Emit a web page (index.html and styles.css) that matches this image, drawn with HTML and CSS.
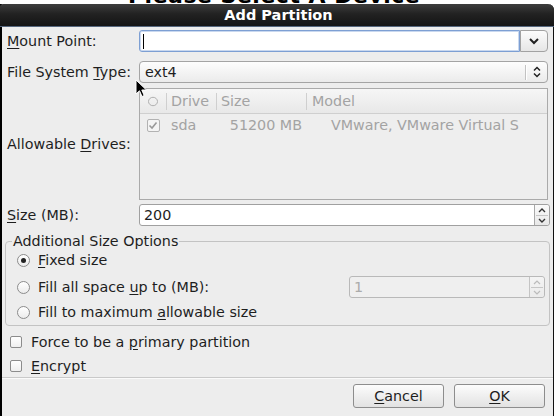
FILE: index.html
```html
<!DOCTYPE html>
<html>
<head>
<meta charset="utf-8">
<link rel="stylesheet" href="styles.css">
</head>
<body>
<div class="backdrop"><div class="backdrop-text">Please Select A Device</div></div>
<div class="dialog">
  <div class="titlebar">Add Partition</div>
  <div class="content">
    <div class="row r1">
      <div class="label"><u>M</u>ount Point:</div>
      <div class="field combo-entry">
        <div class="entry focused"><span class="caret"></span></div>
        <div class="combo-btn">
          <svg width="12" height="8" viewBox="0 0 12 8"><path d="M2 2 L6 6 L10 2" fill="none" stroke="#222" stroke-width="2"/></svg>
        </div>
      </div>
    </div>
    <div class="row r2">
      <div class="label">File System <u>T</u>ype:</div>
      <div class="field combo-box">
        <span class="combo-text">ext4</span>
        <span class="combo-sep"></span>
        <svg class="updown" width="10" height="12" viewBox="0 0 10 12"><path d="M2 4.5 L5 1.5 L8 4.5 M2 7.5 L5 10.5 L8 7.5" fill="none" stroke="#222" stroke-width="1.5"/></svg>
      </div>
    </div>
    <div class="row r3">
      <div class="label">Allowable <u>D</u>rives:</div>
      <div class="field table">
        <div class="thead">
          <div class="c c0"><svg width="12" height="11" viewBox="0 0 12 11"><ellipse cx="6" cy="5.5" rx="4.5" ry="4.2" fill="none" stroke="#b0b0b0" stroke-width="1"/></svg></div>
          <div class="c c1">Drive</div>
          <div class="c c2">Size</div>
          <div class="c c3">Model</div>
        </div>
        <div class="trow">
          <div class="c c0"><span class="tcheck"><svg width="10" height="9" viewBox="0 0 10 9"><path d="M1.5 4.5 L4 7 L8.5 1.5" fill="none" stroke="#999" stroke-width="1.6"/></svg></span></div>
          <div class="c c1">sda</div>
          <div class="c c2 num">51200 MB</div>
          <div class="c c3 model">VMware, VMware Virtual S</div>
        </div>
      </div>
    </div>
    <div class="row r4">
      <div class="label"><u>S</u>ize (MB):</div>
      <div class="field spin">
        <span class="spin-text">200</span>
        <div class="spin-btns">
          <svg width="10" height="8" viewBox="0 0 10 8"><path d="M2 6 L5 3 L8 6" fill="none" stroke="#333" stroke-width="1.4"/></svg>
          <span class="spin-mid"></span>
          <svg width="10" height="8" viewBox="0 0 10 8"><path d="M2 2 L5 5 L8 2" fill="none" stroke="#333" stroke-width="1.4"/></svg>
        </div>
      </div>
    </div>
    <fieldset class="frame">
      <legend>Additional Size Options</legend>
      <div class="opt o1">
        <span class="radio checked"></span><span><u>F</u>ixed size</span>
      </div>
      <div class="opt o2">
        <span class="radio"></span><span>Fill all space <u>u</u>p to (MB):</span>
        <div class="spin disabled">
          <span class="spin-text">1</span>
          <div class="spin-btns">
            <svg width="10" height="8" viewBox="0 0 10 8"><path d="M2 6 L5 3 L8 6" fill="none" stroke="#bbb" stroke-width="1.2"/></svg>
            <span class="spin-mid"></span>
            <svg width="10" height="8" viewBox="0 0 10 8"><path d="M2 2 L5 5 L8 2" fill="none" stroke="#bbb" stroke-width="1.2"/></svg>
          </div>
        </div>
      </div>
      <div class="opt o3">
        <span class="radio"></span><span>Fill to maximum <u>a</u>llowable size</span>
      </div>
    </fieldset>
    <div class="check c-force"><span class="box"></span><span>Force to be a <u>p</u>rimary partition</span></div>
    <div class="check c-enc"><span class="box"></span><span><u>E</u>ncrypt</span></div>
  </div>
  <div class="sep"></div>
  <div class="actions">
    <div class="btn"><u>C</u>ancel</div>
    <div class="btn"><u>O</u>K</div>
  </div>
  <svg class="cursor" width="13" height="19" viewBox="0 0 13 19"><path d="M1 1 L1 15 L4.5 11.8 L7 17.5 L9.2 16.5 L6.8 11 L11.5 11 Z" fill="#000" stroke="#fff" stroke-width="1"/></svg>
</div>
</body>
</html>
```

FILE: styles.css
```css
html, body {
  margin: 0;
  padding: 0;
  background: #ffffff;
}
body {
  width: 558px;
  height: 419px;
  overflow: hidden;
  font-family: "DejaVu Sans", sans-serif;
  font-size: 14.3px;
  color: #1e1e1e;
}
u { text-decoration: underline; text-underline-offset: 2px; }

.backdrop {
  height: 4px;
  overflow: hidden;
}
.backdrop-text {
  margin-top: -15px;
  margin-left: 128px;
  font: bold 22px/22px "DejaVu Sans", sans-serif;
  letter-spacing: 0.5px;
  color: #000;
  white-space: nowrap;
}

.dialog {
  position: relative;
  width: 551px;
  height: 412px;
  border-left: 2px solid #000;
  border-right: 1px solid #111;
  background: #ededed;
  display: flex;
  flex-direction: column;
  border-top-right-radius: 6px;
}
.titlebar {
  height: 22px;
  line-height: 22px;
  background: linear-gradient(#3d3d3d, #222 45%, #141414);
  border-bottom: 1px solid #56677e;
  color: #fff;
  font-weight: bold;
  font-size: 14.5px;
  text-align: center;
  border-top-right-radius: 6px;
  border-top-left-radius: 3px;
  margin-left: -2px;
  margin-right: -1px;
  padding-left: 3px;
}
.content {
  padding: 3px 3px 0 3px;
  display: flex;
  flex-direction: column;
}
.row {
  display: flex;
  align-items: center;
}
.label {
  width: 132px;
  padding-left: 2px;
  flex: none;
  white-space: nowrap;
}
.field { flex: 1; }
.r1 { height: 22px; }
.r2 { height: 22px; margin-top: 9px; }
.r3 { height: 112px; margin-top: 5px; }
.r4 { height: 22px; margin-top: 4px; }

.r1 .field, .r2 .field, .r3 .field { margin-right: 2px; }

/* editable combo */
.combo-entry {
  display: flex;
  height: 22px;
}
.entry {
  flex: 1;
  background: #fff;
  border: 1px solid #9a9a9a;
  border-right: none;
  border-radius: 3px 0 0 3px;
  display: flex;
  align-items: center;
  padding-left: 3px;
}
.entry.focused {
  border: 1px solid #7d9fd3;
  box-shadow: inset 0 0 0 1px #c9d8ef;
}
.caret {
  width: 1px;
  height: 15px;
  background: #000;
}
.combo-btn {
  width: 26px;
  border: 1px solid #a2a2a2;
  border-radius: 0 4px 4px 0;
  background: linear-gradient(#fcfcfc, #e6e6e6);
  display: flex;
  align-items: center;
  justify-content: center;
}

/* button combo */
.combo-box {
  height: 20px;
  border: 1px solid #a4a4a4;
  border-radius: 4px;
  background: linear-gradient(#fdfdfd, #ebebeb);
  display: flex;
  align-items: center;
}
.combo-text { flex: 1; padding-left: 5px; }
.combo-sep {
  width: 1px;
  height: 15px;
  background: #c2c2c2;
  border-right: 1px solid #fff;
}
.updown { margin: 0 5px 0 5px; }

/* table */
.table {
  align-self: stretch;
  border: 1px solid #aaaaaa;
  background: #eeeeee;
  color: #a3a3a3;
}
.thead {
  height: 24px;
  display: flex;
  align-items: center;
  background: linear-gradient(#f6f6f6, #e8e8e8);
  border-bottom: 1px solid #cfcfcf;
}
.trow {
  height: 22px;
  display: flex;
  align-items: center;
}
.c { flex: none; white-space: nowrap; box-sizing: border-box; }
.c0 { width: 26px; display: flex; justify-content: center; }
.c1 { width: 50px; padding-left: 4px; }
.c2 { width: 90px; padding-left: 4px; }
.c3 { flex: 1; padding-left: 5px; }
.thead .c1, .thead .c2, .thead .c3 { border-left: 1px solid #cfcfcf; line-height: 17px; }
.trow .c1 { padding-left: 5px; }
.num { text-align: right; padding-right: 4px; }
.model { padding-left: 25px; }
.tcheck {
  width: 11px;
  height: 11px;
  border: 1px solid #b2b2b2;
  border-radius: 2px;
  background: #f4f4f4;
  display: flex;
  align-items: center;
  justify-content: center;
}

/* spin */
.spin {
  height: 20px;
  border: 1px solid #a0a0a0;
  border-radius: 3px;
  background: #fff;
  display: flex;
  align-items: center;
}
.spin-text { flex: 1; padding-left: 4px; }
.spin-btns {
  width: 14px;
  align-self: stretch;
  border-left: 1px solid #a8a8a8;
  background: linear-gradient(#fafafa, #e8e8e8);
  display: flex;
  flex-direction: column;
  align-items: center;
  justify-content: center;
  border-radius: 0 3px 3px 0;
}
.spin-btns svg { display: block; }
.spin-mid { width: 12px; height: 1px; background: #c6c6c6; margin: 1px 0; }

.spin.disabled {
  width: 194px;
  margin-left: auto;
  margin-right: 4px;
  background: #efefef;
  border-color: #b9b9b9;
  color: #ababab;
}
.spin.disabled .spin-btns { border-left-color: #c4c4c4; background: linear-gradient(#f4f4f4, #ebebeb); }

/* frame */
.frame {
  margin: 7px 0 0 0;
  padding: 0 0 2px 6px;
  border: 1px solid #c3c3c3;
  border-radius: 4px;
  min-width: 0;
}
.frame legend {
  padding: 0 1px;
  line-height: 16px;
  height: 16px;
}
.opt {
  display: flex;
  align-items: center;
  padding-left: 5px;
}
.o1 { height: 22px; }
.o2 { height: 26px; margin-top: 3px; }
.o3 { height: 22px; margin-top: 1px; }
.radio {
  width: 11px;
  height: 11px;
  border: 1px solid #8c8c8c;
  border-radius: 50%;
  background: linear-gradient(#ffffff, #ececec);
  margin-right: 8px;
  flex: none;
  display: flex;
  align-items: center;
  justify-content: center;
}
.radio.checked::after {
  content: "";
  width: 5px;
  height: 5px;
  border-radius: 50%;
  background: #222;
}

/* checks */
.check {
  display: flex;
  align-items: center;
  height: 22px;
  padding-left: 5px;
}
.c-force { margin-top: 5px; }
.c-enc { margin-top: 2px; }
.box {
  width: 10px;
  height: 10px;
  border: 1px solid #8c8c8c;
  border-radius: 2px;
  background: linear-gradient(#ffffff, #efefef);
  margin-right: 9px;
  flex: none;
}

.sep {
  height: 0;
  border-top: 1px solid #c9c9c9;
  border-bottom: 1px solid #fafafa;
}
.actions {
  display: flex;
  justify-content: flex-end;
  gap: 10px;
  padding: 5px 8px 0 0;
}
.btn {
  width: 89px;
  height: 22px;
  border: 1px solid #8d8d8d;
  border-radius: 3px;
  background: linear-gradient(#fcfcfc, #e2e2e2);
  display: flex;
  align-items: center;
  justify-content: center;
}

.cursor {
  position: absolute;
  left: 133px;
  top: 75px;
}
```
